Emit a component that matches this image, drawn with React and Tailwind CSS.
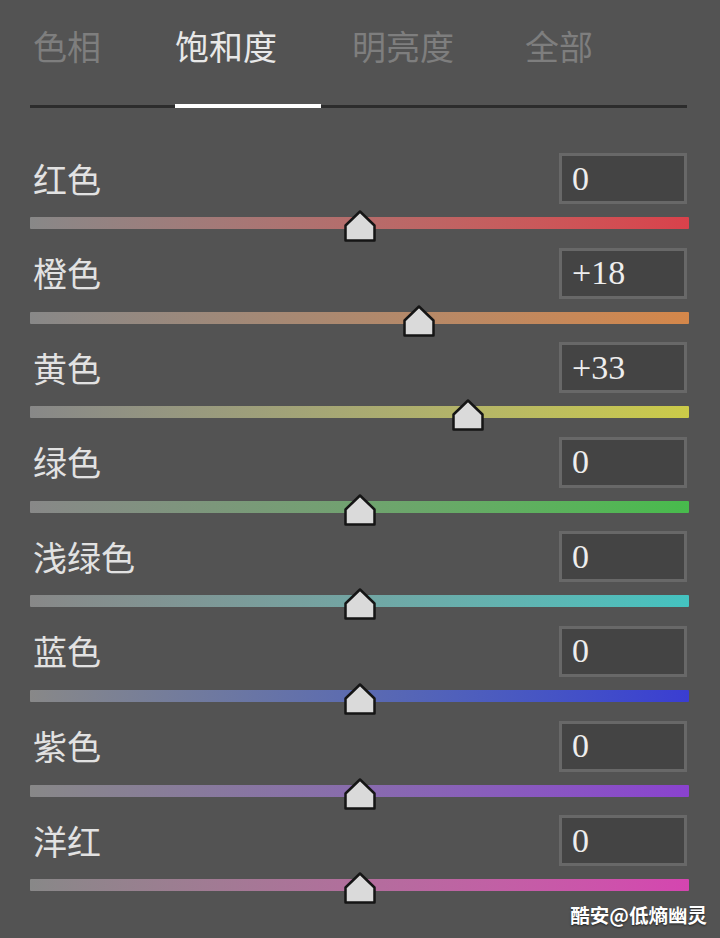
import React from "react";

const rows = [
  { label: "红色", value: 0, grad: "bg-linear-to-r from-[#888888] to-[#d9414b]" },
  { label: "橙色", value: 18, grad: "bg-linear-to-r from-[#888888] to-[#d4874a]" },
  { label: "黄色", value: 33, grad: "bg-linear-to-r from-[#888888] to-[#cccb48]" },
  { label: "绿色", value: 0, grad: "bg-linear-to-r from-[#888888] to-[#47bb4c]" },
  { label: "浅绿色", value: 0, grad: "bg-linear-to-r from-[#888888] to-[#43c3c0]" },
  { label: "蓝色", value: 0, grad: "bg-linear-to-r from-[#888888] to-[#3a3dd2]" },
  { label: "紫色", value: 0, grad: "bg-linear-to-r from-[#888888] to-[#8a42cf]" },
  { label: "洋红", value: 0, grad: "bg-linear-to-r from-[#888888] to-[#d545b0]" },
];

const TRACK_W = 659;

function Thumb({ value }) {
  const center = ((value + 100) / 200) * TRACK_W;
  return (
    <svg
      className="absolute top-[-7px]"
      style={{ left: center - 16 }}
      width="32"
      height="32"
      viewBox="0 0 32 32"
    >
      <path
        d="M16 1.5 L30.5 15.5 L30.5 30.5 L1.5 30.5 L1.5 15.5 Z"
        fill="#dadada"
        stroke="#151515"
        strokeWidth="2.5"
        strokeLinejoin="round"
      />
    </svg>
  );
}

function Row({ label, value, grad }) {
  const text = value > 0 ? `+${value}` : `${value}`;
  return (
    <div className="flex flex-col h-[94.6px]">
      <div className="flex items-center justify-between h-[51px]">
        <span className="pl-[3px] text-[34px] leading-[34px] text-[#e2e2e2]">{label}</span>
        <div className="mr-[3px] w-[128px] h-[51px] border-[3px] border-[#686868] bg-[#444444] flex items-center pl-[10px]">
          <span className="font-['Liberation_Serif',serif] text-[34px] leading-[34px] text-[#eeeeee]">
            {text}
          </span>
        </div>
      </div>
      <div className={`relative mt-[13px] h-[12px] w-[659px] rounded-[1px] ${grad}`}>
        <Thumb value={value} />
      </div>
    </div>
  );
}

export default function App() {
  return (
    <div className="relative w-[720px] h-[938px] overflow-hidden bg-[#535353] font-['Noto_Sans_CJK_SC','Noto_Sans',sans-serif]">
      <div className="px-[30px] pt-[29px]">
        <div className="flex h-[34px] pl-[3px] text-[34px] leading-[34px] text-[#7e7e7e]">
          <span className="w-[142px]">色相</span>
          <span className="w-[177px] text-[#e8e8e8]">饱和度</span>
          <span className="w-[173px]">明亮度</span>
          <span>全部</span>
        </div>
        <div className="relative mt-[42px] h-[3px] w-[657px] bg-[#2c2c2c]">
          <div className="absolute left-[145px] top-[-1px] h-[4px] w-[146px] bg-white" />
        </div>
        <div className="mt-[45px] flex flex-col">
          {rows.map((r) => (
            <Row key={r.label} {...r} />
          ))}
        </div>
      </div>
      <div className="absolute right-[13px] bottom-[12px] text-[19.5px] leading-[22px] font-bold text-white [text-shadow:0_1px_2px_rgba(0,0,0,0.6)]">
        酷安@低熵幽灵
      </div>
    </div>
  );
}
